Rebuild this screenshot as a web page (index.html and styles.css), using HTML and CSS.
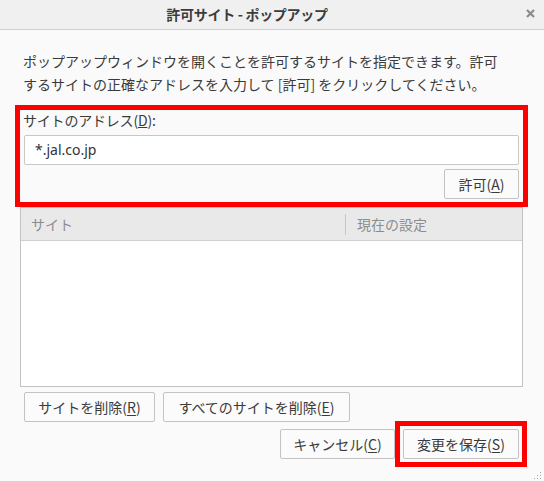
FILE: index.html
```html
<!DOCTYPE html>
<html lang="ja">
<head>
<meta charset="utf-8">
<title>許可サイト - ポップアップ</title>
<link rel="stylesheet" href="styles.css">
</head>
<body>
<div class="dialog">
  <div class="titlebar">
    <span class="title">許可サイト - ポップアップ</span>
    <svg class="close" width="9" height="9" viewBox="0 0 9 9"><path d="M1 1 L8 8 M8 1 L1 8" stroke="#8b8b8b" stroke-width="2.2" fill="none"/></svg>
  </div>
  <div class="content">
    <p class="intro">ポップアップウィンドウを開くことを許可するサイトを指定できます。許可<br>するサイトの正確なアドレスを入力して [許可] をクリックしてください。</p>
    <div class="address">
      <div class="label">サイトのアドレス(<u>D</u>):</div>
      <div class="input">*.jal.co.jp</div>
      <div class="allow-row"><button class="btn btn-allow">許可(<u>A</u>)</button></div>
    </div>
    <div class="table">
      <div class="thead">
        <div class="th th-site">サイト</div>
        <div class="th th-status">現在の設定</div>
      </div>
      <div class="tbody"></div>
    </div>
    <div class="row-remove">
      <button class="btn btn-remove">サイトを削除(<u>R</u>)</button>
      <button class="btn btn-remove-all">すべてのサイトを削除(<u>E</u>)</button>
    </div>
    <div class="row-actions">
      <button class="btn btn-cancel">キャンセル(<u>C</u>)</button>
      <span class="highlight"><button class="btn btn-save">変更を保存(<u>S</u>)</button></span>
    </div>
  </div>
  <svg class="grip" width="8" height="8" viewBox="0 0 8 8">
    <rect x="6" y="0" width="1" height="1" fill="#aaa"/>
    <rect x="3" y="3" width="1" height="1" fill="#aaa"/>
    <rect x="6" y="3" width="1" height="1" fill="#aaa"/>
    <rect x="0" y="6" width="1" height="1" fill="#aaa"/>
    <rect x="3" y="6" width="1" height="1" fill="#aaa"/>
    <rect x="6" y="6" width="1" height="1" fill="#aaa"/>
  </svg>
</div>
</body>
</html>
```

FILE: styles.css
```css
* { box-sizing: border-box; }
html, body { margin: 0; padding: 0; }
body {
  background: #fafafa;
  font-family: "Noto Sans CJK JP", "Noto Sans", sans-serif;
  font-size: 14px;
  color: #3a3a3a;
  width: 544px;
  height: 481px;
  overflow: hidden;
}
.dialog { position: relative; width: 544px; height: 481px; }
.titlebar {
  height: 30px;
  background: #f0f0f0;
  border-bottom: 1px solid #cfcfcf;
  display: flex;
  align-items: center;
  justify-content: center;
  padding-right: 50px;
  position: relative;
}
.title {
  font-weight: bold;
  font-size: 14px;
  color: #3c3c3c;
  letter-spacing: -0.3px;
  line-height: 29px;
}
.close { position: absolute; right: 9px; top: 9px; }
.content { padding: 0 21px 0 20px; }
.intro {
  margin: 20px 0 0 0;
  padding-left: 3px;
  line-height: 23px;
  letter-spacing: 0;
  height: 46px;
  white-space: nowrap;
}
.address {
  margin-top: 14px;
  outline: 5px solid #ff0000;
  padding: 0 4px 3px 4px;
}
.label { line-height: 20px; height: 20px; letter-spacing: -0.2px; margin-left: -1px; }
.input {
  margin-top: 5px;
  height: 30px;
  background: #fff;
  border: 1px solid #c8c8c8;
  border-radius: 2px;
  padding-left: 10px;
  line-height: 27px;
  font-family: "Noto Sans", "Noto Sans CJK JP", sans-serif;
  font-size: 14px;
  color: #333;
}
.allow-row { display: flex; justify-content: flex-end; margin-top: 4px; }
.btn {
  height: 30px;
  background: #fbfbfb;
  border: 1px solid #c3c3c3;
  border-radius: 2px;
  font-family: "Noto Sans CJK JP", "Noto Sans", sans-serif;
  font-size: 14px;
  color: #3a3a3a;
  letter-spacing: 0;
  padding: 0 6px;
  line-height: 26px;
}
.btn u { text-decoration-thickness: 1px; text-underline-offset: 2px; }
.btn-allow { width: 75px; }
.table {
  margin-top: 5px;
  height: 180px;
  border: 1px solid #c2c2c2;
  display: flex;
  flex-direction: column;
  background: #fff;
}
.thead {
  height: 33px;
  background: #e9e9e9;
  border-bottom: 1px solid #cfcfcf;
  display: flex;
  align-items: center;
}
.th { color: #8d8d8d; letter-spacing: 0; line-height: 20px; }
.th-site { width: 324px; padding-left: 10px; }
.th-status { flex: 1; padding-left: 11px; border-left: 1px solid #c8c8c8; height: 21px; }
.tbody { flex: 1; background: #fff; }
.row-remove { display: flex; gap: 8px; margin-top: 5px; padding-left: 4px; }
.btn-remove { width: 131px; }
.btn-remove-all { width: 187px; }
.row-actions { display: flex; justify-content: flex-end; gap: 8px; margin-top: 7px; padding-right: 4px; }
.btn-cancel { width: 115px; }
.highlight { display: flex; padding: 3px; margin: -3px; outline: 5px solid #ff0000; }
.btn-save { width: 116px; }
.grip { position: absolute; right: 2px; bottom: 1px; }
```
